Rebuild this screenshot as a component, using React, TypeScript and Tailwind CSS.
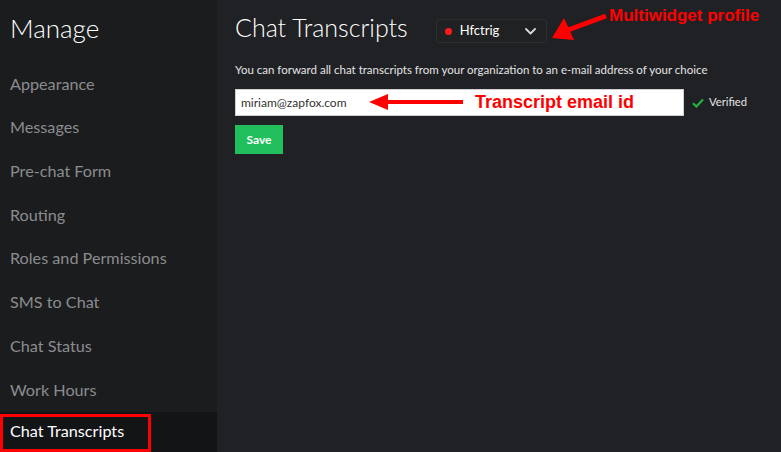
import React from 'react';

const NAV_ITEMS = [
  'Appearance',
  'Messages',
  'Pre-chat Form',
  'Routing',
  'Roles and Permissions',
  'SMS to Chat',
  'Chat Status',
  'Work Hours',
];

function Sidebar() {
  return (
    <aside className="w-[217px] shrink-0 bg-[#1b1c1e] flex flex-col">
      <h1 className="pl-[10px] pt-[10px] h-[62px] text-[26px] leading-[36px] text-white font-light">Manage</h1>
      <nav className="flex flex-col">
        {NAV_ITEMS.map((item) => (
          <div key={item} className="h-[43.7px] pl-[10px] flex items-center text-[16.2px] text-[#8b8c8e]">
            {item}
          </div>
        ))}
        <div className="relative h-[40px] bg-[#131416] pl-[10px] flex items-center text-[16.2px] text-white">
          Chat Transcripts
          {/* annotation box */}
          <div className="absolute left-0 top-[2px] w-[151px] h-[38px] border-[3px] border-[#ff0000]" />
        </div>
      </nav>
    </aside>
  );
}

function Chevron() {
  return (
    <svg width="11" height="7" viewBox="0 0 11 7" fill="none">
      <path d="M1 1l4.5 4.5L10 1" stroke="#d8d8d8" strokeWidth="1.8" strokeLinecap="round" strokeLinejoin="round" />
    </svg>
  );
}

function Check() {
  return (
    <svg width="12" height="10" viewBox="0 0 12 10" fill="none">
      <path d="M1 5.2l3.4 3.3L11 1.5" stroke="#22b33f" strokeWidth="2.2" />
    </svg>
  );
}

export default function App() {
  return (
    <div className="w-[781px] h-[452px] flex overflow-hidden bg-[#202124]" style={{ fontFamily: 'Lato, "Noto Sans", sans-serif' }}>
      <Sidebar />
      <main className="relative flex-1 pl-[18px]">
        <div className="flex items-center h-[58px] pb-[4px]">
          <h2 className="text-[25px] font-light text-white leading-none">Chat Transcripts</h2>
          <div className="ml-[28px] mt-[8px] w-[111px] h-[24px] rounded-[3px] border border-[#2b3033] bg-[#1f2123] flex items-center pl-[8px] pr-[10px]">
            <span className="w-[7px] h-[7px] rounded-full bg-[#ff1a1a]" />
            <span className="ml-[8px] text-[13px] text-white flex-1">Hfctrig</span>
            <Chevron />
          </div>
        </div>
        <p className="mt-[4px] text-[11.5px] text-[#e4e4e4] leading-[16px]">
          You can forward all chat transcripts from your organization to an e-mail address of your choice
        </p>
        <div className="mt-[11px] flex items-center">
          <div className="w-[449px] h-[27px] bg-white border border-[#d0d0d0] flex items-center pl-[5px] text-[12px] text-[#333]">
            miriam@zapfox.com
          </div>
          <span className="ml-[8px]"><Check /></span>
          <span className="ml-[5px] text-[11.2px] text-[#e4e4e4]">Verified</span>
        </div>
        <button className="mt-[9px] w-[48px] h-[29px] bg-[#20bf5b] text-white text-[12px] font-bold">Save</button>

        {/* annotations */}
        <svg className="absolute left-[331px] top-[8px]" width="62" height="36" viewBox="0 0 62 36">
          <path d="M58 8 L20 22" stroke="#ff0000" strokeWidth="5" />
          <path d="M4 30 L16 10 L26 32 Z" fill="#ff0000" />
        </svg>
        <div className="absolute left-[392px] top-[5px] text-[17px] font-bold text-[#ff0000] leading-[22px]" style={{ fontFamily: '"Liberation Sans", Arial, sans-serif' }}>
          Multiwidget profile
        </div>
        <svg className="absolute left-[150px] top-[92px]" width="100" height="20" viewBox="0 0 100 20">
          <path d="M18 10 H96" stroke="#ff0000" strokeWidth="4" />
          <path d="M2 10 L21 2 L21 18 Z" fill="#ff0000" />
        </svg>
        <div className="absolute left-[258px] top-[90px] text-[18px] font-bold text-[#ff0000] leading-[24px]" style={{ fontFamily: '"Liberation Sans", Arial, sans-serif' }}>
          Transcript email id
        </div>
      </main>
    </div>
  );
}
